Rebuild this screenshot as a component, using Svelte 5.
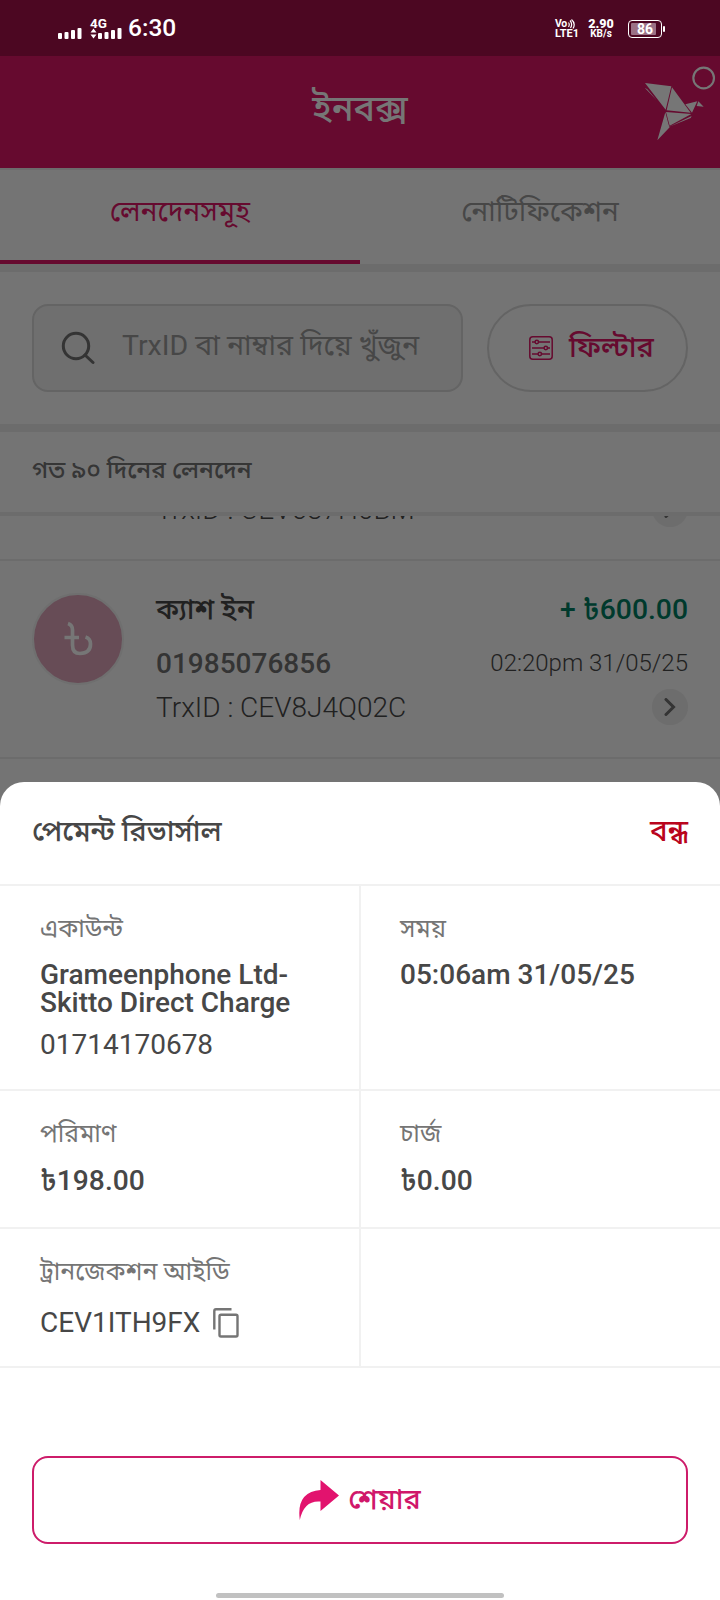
<script>
  const details = [
    { label: 'একাউন্ট', strong: ['Grameenphone Ltd-', 'Skitto Direct Charge'], plain: '01714170678' },
    { label: 'সময়', strong: ['05:06am 31/05/25'] },
    { label: 'পরিমাণ', strong: ['৳198.00'], money: true },
    { label: 'চার্জ', strong: ['৳0.00'], money: true },
    { label: 'ট্রানজেকশন আইডি', plain: 'CEV1ITH9FX', copy: true },
    {}
  ];
</script>

<div class="screen">
  <div class="status">
    <div class="signals">
      <svg width="24" height="12" viewBox="0 0 24 12" fill="#fff"><rect x="0" y="6" width="4" height="6" rx="1" /><rect x="6.500" y="5" width="4" height="7" rx="1" /><rect x="13" y="3" width="4" height="9" rx="1" /><rect x="19.500" y="1" width="4" height="11" rx="1" /></svg>
      <div class="net">
        <span>4G</span>
        <svg width="32" height="12" viewBox="0 0 32 12" fill="#fff"><path d="M3.500 1.500l3 4h-6zM3.500 11.500l-3-4h6z" /><rect x="8" y="6" width="4" height="6" rx="1" /><rect x="14.500" y="5" width="4" height="7" rx="1" /><rect x="21" y="3" width="4" height="9" rx="1" /><rect x="27.500" y="1" width="4" height="11" rx="1" /></svg>
      </div>
    </div>
    <span class="clock">6:30</span>
    <span class="spacer"></span>
    <div class="volte">
      <div class="vo"><span>Vo</span><svg width="7" height="10" viewBox="0 0 7 10" fill="none" stroke="#fff" stroke-width="1.200"><path d="M.5 3.500q1.500 2 0 4.500M2 1.500q3 3.500 .5 7.500M3.500 .5q4.500 4 1.500 9" /></svg></div>
      <span class="lte">LTE1</span>
    </div>
    <div class="rate"><b>2.90</b><span>KB/s</span></div>
    <div class="battery"><span>86</span></div>
  </div>

  <header>
    <span></span>
    <h1>ইনবক্স</h1>
    <svg width="84" height="90" viewBox="0 0 252 270" fill="#767676">
      <path d="M27 69L106 79 89 149zM108 82L164 158 92 151zM90 156L166 162 101 197zM88 157L98 194 101 202 64 241zM100 200L167 168 164 174zM148 133L184 124 168 158zM187 124L203 140 182 138zM26 83L34 88 62 121z" />
      <circle cx="203" cy="54" r="31" fill="none" stroke="#767676" stroke-width="6.500" />
    </svg>
  </header>

  <nav>
    <span class="tab active">লেনদেনসমূহ</span>
    <span class="tab">নোটিফিকেশন</span>
  </nav>

  <section class="tools">
    <div class="search">
      <svg width="34" height="34" viewBox="0 0 34 34" fill="none" stroke="#343434" stroke-width="3"><circle cx="15" cy="15" r="12.700" /><path d="M24 24l8 7.500" stroke-linecap="round" /></svg>
      <span class="hint">TrxID বা নাম্বার দিয়ে খুঁজুন</span>
    </div>
    <div class="filter">
      <svg width="24" height="24" viewBox="0 0 24 24" fill="none" stroke="#660a2f" stroke-width="1.500"><rect x=".8" y=".8" width="22.400" height="22.400" rx="3" /><path d="M3 6h3m4 0h11M3 12h12m4 0h2M3 18h6m4 0h8" /><circle cx="7.800" cy="6" r="1.700" /><circle cx="16.800" cy="12" r="1.700" /><circle cx="10.800" cy="18" r="1.700" /></svg>
      <span>ফিল্টার</span>
    </div>
  </section>

  <div class="period"><span>গত ৯০ দিনের লেনদেন</span></div>

  <div class="list">
    <div class="row cut">
      <span class="trx">TrxID : CEV637H0BM</span>
      <span class="go"><svg width="12" height="18" viewBox="0 0 12 18" fill="none" stroke="#343434" stroke-width="3"><path d="M2 1.500l7.500 7.500L2 16.500" stroke-linecap="round" /></svg></span>
    </div>
    <div class="row">
      <div class="avatar">
        <svg width="30" height="36" viewBox="0 0 30 36" fill="none" stroke="#767676" stroke-width="3.700"><path d="M5 2.500Q9.500 4 9.500 9v15q0 8.500 7.500 8.500 10.500-.5 10.500-9.500 0-5.500-5-7M1.500 16.500h14.500" /></svg>
      </div>
      <div class="info">
        <span class="name">ক্যাশ ইন</span>
        <span class="phone">01985076856</span>
        <span class="trx">TrxID : CEV8J4Q02C</span>
      </div>
      <div class="side">
        <span class="amount">+ ৳600.00</span>
        <span class="time">02:20pm 31/05/25</span>
        <span class="go"><svg width="12" height="18" viewBox="0 0 12 18" fill="none" stroke="#343434" stroke-width="3"><path d="M2 1.500l7.500 7.500L2 16.500" stroke-linecap="round" /></svg></span>
      </div>
    </div>
  </div>

  <div class="sheet">
    <div class="head"><h2>পেমেন্ট রিভার্সাল</h2><span class="close">বন্ধ</span></div>
    <div class="grid">
      {#each details as d}
        <div class="cell">
          {#if d.label}<span class="label">{d.label}</span>{/if}
          {#if d.strong}<div class="strong" class:money={d.money}>{#each d.strong as s}<span>{s}</span>{/each}</div>{/if}
          {#if d.plain}
            <div class="plain" class:id={d.copy}>
              <span>{d.plain}</span>
              {#if d.copy}<svg width="26" height="30" viewBox="0 0 26 30" fill="none" stroke="#757575" stroke-width="2.400"><path d="M1.300 21.500V3q0-1.700 1.700-1.700h15.500" /><rect x="6.500" y="6.700" width="18" height="21.800" rx="1.500" /></svg>{/if}
            </div>
          {/if}
        </div>
      {/each}
    </div>
    <div class="share">
      <svg width="40" height="40" viewBox="0 0 40 40" fill="#e2136e"><path d="M21.500 0L40 15.500 21.500 31V21.500Q5 20 .8 40-3 12 21.500 10z" /></svg>
      <span>শেয়ার</span>
    </div>
    <div class="handle"></div>
  </div>
</div>

<style>
  :global(body) { margin: 0; }
  .screen { position: relative; width: 720px; height: 1600px; overflow: hidden; background: #747474; font-family: Roboto, "Noto Sans Bengali", "Noto Sans", sans-serif; color: #212121; }
  .screen * { box-sizing: border-box; }
  span, h1, h2 { white-space: nowrap; margin: 0; font-weight: inherit; }
  .status { height: 56px; background: #4c0722; display: flex; align-items: center; padding: 0 56px 0 58px; color: #fff; }
  .signals { display: flex; align-items: flex-end; gap: 8px; height: 20px; margin-top: 1px; }
  .signals svg { display: block; }
  .net { display: flex; flex-direction: column; width: 32px; }
  .net span { font-size: 13.500px; font-weight: 700; line-height: 10px; height: 9px; }
  .clock { font-size: 24.500px; font-weight: 500; margin-left: 6px; line-height: 58px; }
  .spacer { flex: 1; }
  .volte { display: flex; flex-direction: column; width: 24px; margin-top: 1px; }
  .vo { display: flex; gap: 1px; font-size: 10.500px; font-weight: 700; line-height: 10px; height: 10px; }
  .vo span { letter-spacing: -.3px; }
  .lte { font-size: 11px; font-weight: 700; line-height: 10px; }
  .rate { display: flex; flex-direction: column; align-items: center; width: 26px; margin: 1px 14px 0 9px; font-size: 10px; line-height: 10px; font-weight: 700; }
  .rate b { font-size: 12.500px; }
  .battery { position: relative; width: 34px; height: 18px; margin: 2px 2px 0 0; border: 1.500px solid #fff; border-radius: 4px; padding: 2px; }
  .battery span { display: block; width: 25px; height: 12px; line-height: 13px; padding-left: 6px; font-size: 14px; font-weight: 700; background: #9b7186; border-radius: 1px; }
  .battery::after { content: ""; position: absolute; right: -4px; top: 5px; width: 2px; height: 6px; background: #fff; border-radius: 1px; }
  header { height: 114px; border-bottom: 2px solid #6c6c6c; background: #660a2f; display: grid; grid-template-columns: 84px 1fr 84px; align-items: start; }
  header svg { margin-top: 4px; }
  h1 { font-size: 36px; font-weight: 500; line-height: 106px; height: 108px; text-align: center; color: #767676; }
  nav { display: flex; height: 102px; border-bottom: 8px solid #6c6c6c; }
  .tab { flex: 1; text-align: center; font-size: 28.200px; line-height: 84px; color: #474747; border-bottom: 4px solid transparent; }
  .active { color: #660a2f; border-color: #660a2f; }
  .tools { height: 160px; border-bottom: 8px solid #6c6c6c; display: flex; padding: 32px; gap: 24px; }
  .search { width: 431px; height: 88px; border: 2px solid #646464; border-radius: 16px; background: #6f6f6f; display: flex; align-items: center; padding-left: 27px; }
  .search svg { flex: none; margin-top: 0; }
  .hint { margin-left: 27px; font-size: 28.500px; line-height: 84px; height: 88px; color: #474747; }
  .filter { width: 201px; height: 88px; border: 2px solid #646464; border-radius: 44px; display: flex; align-items: center; padding-left: 40px; color: #660a2f; font-size: 29px; font-weight: 500; }
  .filter span { margin-left: 16px; line-height: 84px; margin-top: -2px; }
  .period { height: 84px; border-bottom: 4px solid #6c6c6c; padding-left: 32px; font-size: 24.500px; font-weight: 500; line-height: 76px; color: #363636; }
  .row { height: 198px; border-bottom: 2px solid #6c6c6c; padding: 0 32px; display: flex; }
  .cut { height: 45px; overflow: hidden; justify-content: space-between; padding-left: 156px; }
  .cut .trx { margin-top: -28px; }
  .cut .go { margin-top: -25px; }
  .avatar { flex: none; width: 92px; height: 92px; margin: 32px 32px 0 0; border-radius: 50%; border: 2px solid #6f6f6f; background: #674c56; display: grid; place-items: center; }
  .info, .side { display: flex; flex-direction: column; }
  .side { flex: 1; align-items: flex-end; }
  .name { font-size: 28.500px; line-height: 97px; height: 81px; font-weight: 500; }
  .phone { font-size: 28px; line-height: 44px; height: 44px; font-weight: 500; color: #343434; }
  .trx { font-size: 28px; line-height: 44px; font-weight: 300; }
  .amount { font-size: 28.300px; line-height: 98px; height: 80px; font-weight: 500; color: #003a2d; }
  .time { font-size: 24px; line-height: 44px; height: 43px; font-weight: 300; }
  .go { flex: none; width: 36px; height: 36px; margin-top: 5px; border-radius: 50%; background: #6d6d6d; display: grid; place-items: center; }
  .sheet { position: absolute; left: 0; top: 782px; width: 720px; height: 818px; background: #fff; border-radius: 24px 24px 0 0; display: flex; flex-direction: column; }
  .head { height: 104px; border-bottom: 2px solid #f1f1f1; display: flex; justify-content: space-between; padding: 0 32px; font-size: 28.700px; line-height: 98px; color: #474747; }
  h2 { font-size: 28.700px; font-weight: 500; }
  .close { color: #b9041c; font-weight: 500; font-size: 29.500px; }
  .grid { display: grid; grid-template-columns: 361px 359px; grid-template-rows: 205px 138px 139px; }
  .cell { border-bottom: 2px solid #f1f1f1; padding: 25px 0 0 40px; display: flex; flex-direction: column; color: #474747; font-size: 28px; }
  .cell:nth-child(odd) { border-right: 2px solid #f1f1f1; }
  .cell:nth-child(even) { padding-left: 39px; }
  .label { font-size: 24.800px; line-height: 36px; height: 50px; color: #757575; }
  .strong { display: flex; flex-direction: column; font-weight: 500; line-height: 28px; }
  .money { margin-top: 1px; font-size: 28.200px; }
  .plain { display: flex; align-items: center; height: 32px; line-height: 32px; margin-top: 12px; }
  .id { margin-top: 3px; gap: 13px; }
  .share { flex: none; width: 656px; height: 88px; margin: 88px 32px 0; border: 2px solid #cd1c6a; border-radius: 16px; display: flex; align-items: center; justify-content: center; gap: 9px; color: #d0176a; font-size: 28.800px; font-weight: 500; line-height: 80px; }
  .share span { margin-top: -2px; }
  .handle { width: 288px; height: 5px; border-radius: 3px; margin: 49px auto 0; background: #c1c1c1; }
</style>
